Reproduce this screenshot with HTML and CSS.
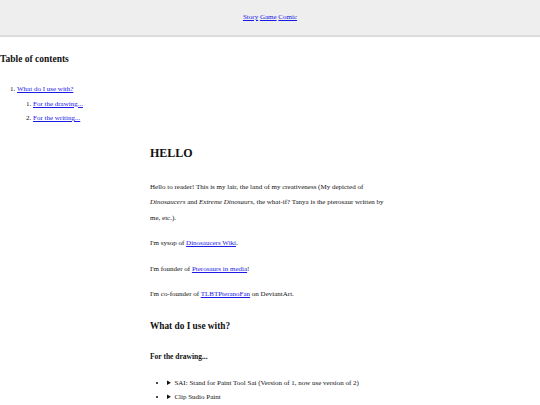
FILE: index.html
```html
<!DOCTYPE html>
<html lang="en">
<head>
    <meta charset="UTF-8">
    <meta name="viewport" content="width=device-width, initial-scale=1.0">
    <title>HELLO</title>
    <link rel="stylesheet" href="styles.css">
</head>
<body>
    <header class="topbar">
        <a href="#">Story</a>
        <a href="#">Game</a>
        <a href="#">Comic</a>
    </header>

    <nav class="toc">
        <h2>Table of contents</h2>
        <ol>
            <li><a href="#use">What do I use with?</a>
                <ol>
                    <li><a href="#drawing">For the drawing...</a></li>
                    <li><a href="#writing">For the writing...</a></li>
                </ol>
            </li>
        </ol>
    </nav>

    <main class="content">
        <h1>HELLO</h1>
        <p>Hello to reader! This is my lair, the land of my creativeness (My depicted of <em>Dinosaucers</em> and <em>Extreme Dinosaurs</em>, the what-if? Tanya is the pterosaur written by me, etc.).</p>
        <p>I'm sysop of <a href="#">Dinosaucers Wiki</a>.</p>
        <p>I'm founder of <a href="#">Pterosaurs in media</a>!</p>
        <p>I'm co-founder of <a href="#">TLBTPteranoFan</a> on DeviantArt.</p>

        <h2 id="use">What do I use with?</h2>
        <h3 id="drawing">For the drawing...</h3>
        <ul class="tools">
            <li>
                <details>
                    <summary>SAI: Stand for Paint Tool Sai (Version of 1, now use version of 2)</summary>
                    <p>Mostly for line art and colouring.</p>
                </details>
            </li>
            <li>
                <details>
                    <summary>Clip Sudio Paint</summary>
                    <p>For comics pages.</p>
                </details>
            </li>
        </ul>
        <h3 id="writing">For the writing...</h3>
    </main>
</body>
</html>
```
FILE: styles.css
```css
body {
    margin: 0;
    font-family: "Liberation Serif", "Times New Roman", serif;
    font-size: 7px;
    line-height: 15.5px;
    color: #111;
    background: #fff;
}
a {
    color: #1a1ae6;
}
.topbar {
    height: 35px;
    line-height: 35px;
    text-align: center;
    background: #eeeeee;
    border-bottom: 2px solid #dcdcdc;
}
.toc h2 {
    margin: 16px 0 0;
    font-size: 9.5px;
    line-height: 12px;
}
.toc ol {
    margin: 17px 0 0;
    padding-left: 17px;
    line-height: 14.5px;
}
.toc ol ol {
    margin: 0;
    padding-left: 16px;
}
.content {
    width: 240px;
    margin: 19px auto 0;
}
h1 {
    margin: 0 0 19px;
    font-size: 12px;
    line-height: 16px;
}
.content p {
    margin: 10px 0;
}
.content h2 {
    margin: 17px 0 0;
    font-size: 9.3px;
    line-height: 13px;
}
h3 {
    margin: 18px 0 0;
    font-size: 7.5px;
    line-height: 11px;
}
.tools {
    margin: 14.5px 0 0;
    padding-left: 17px;
    line-height: 14px;
}
.tools details p {
    margin: 0;
}
```
